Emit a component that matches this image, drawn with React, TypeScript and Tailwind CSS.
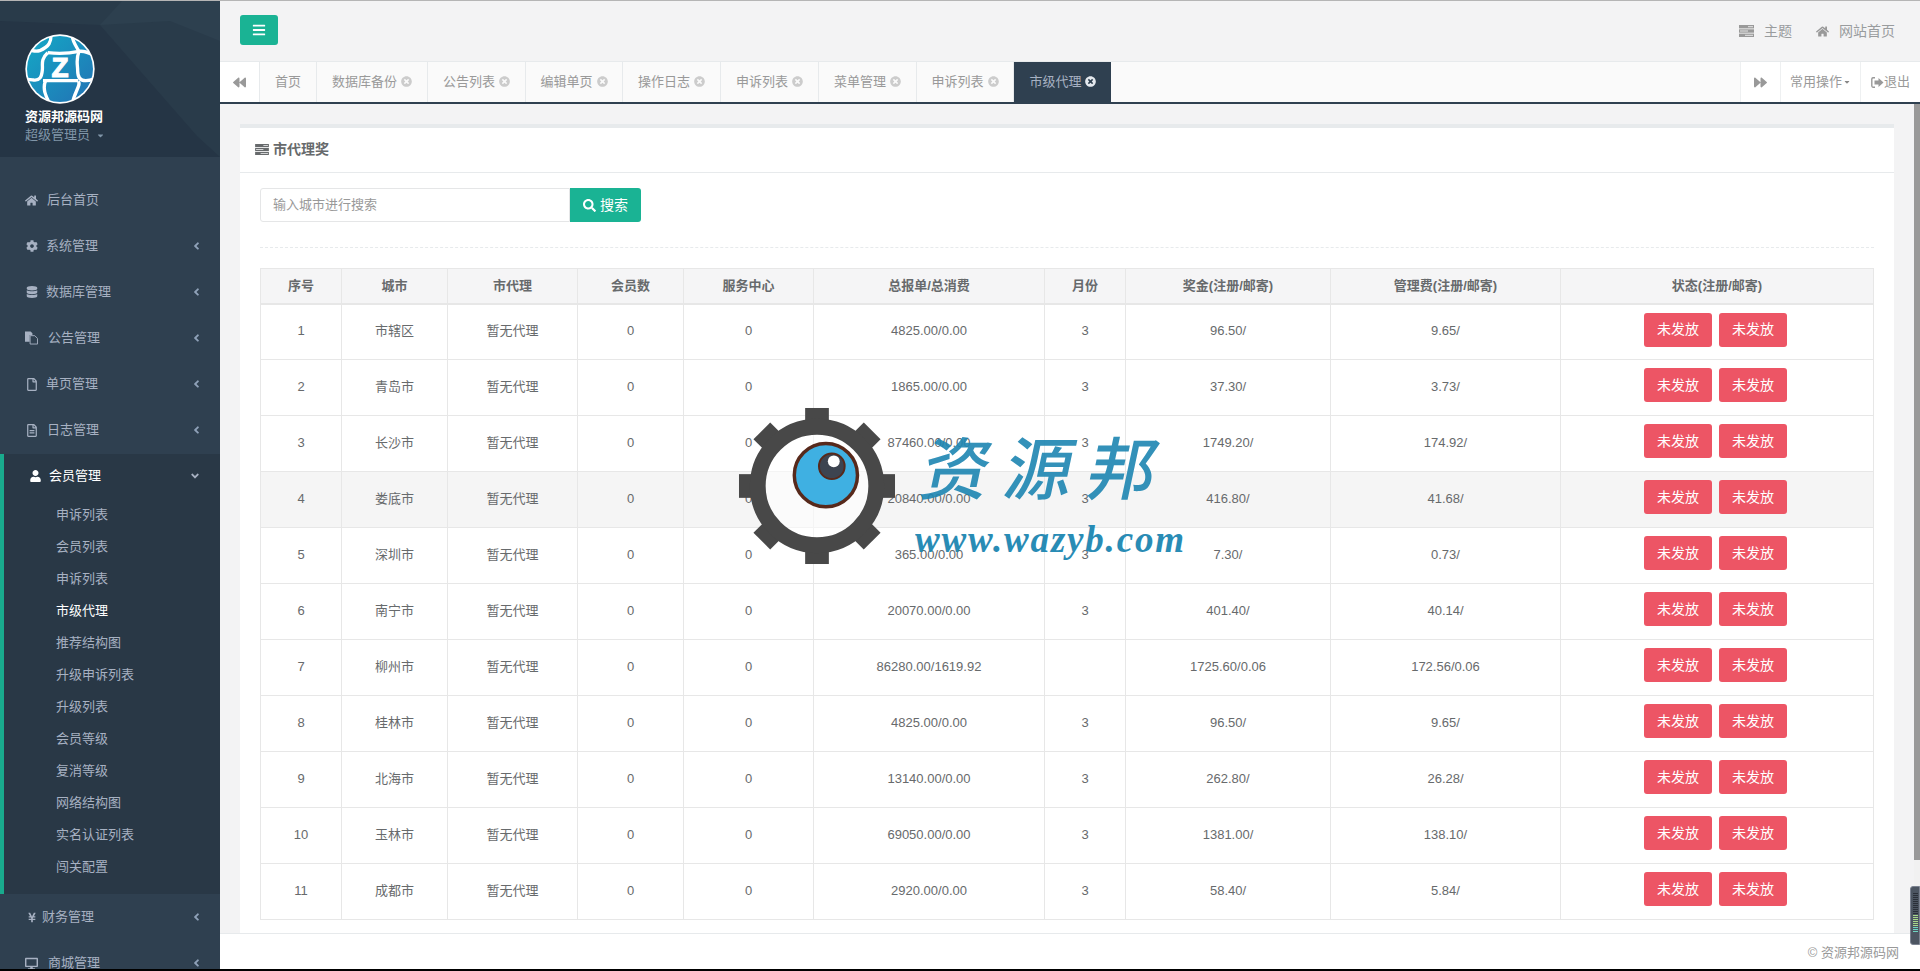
import React from "react";
import {
  FaHome, FaCog, FaDatabase, FaRegFile, FaRegFileAlt, FaUser, FaYenSign, FaDesktop,
  FaAngleLeft, FaAngleDown, FaBars, FaSearch, FaBackward, FaForward, FaTimesCircle, FaCaretDown,
} from "react-icons/fa";

function TasksIcon({ className }: { className?: string }) {
  return (
    <svg viewBox="0 0 15 12" className={className} fill="currentColor">
      <rect x="0" y="0" width="15" height="3.4" />
      <rect x="0" y="4.3" width="15" height="3.4" />
      <rect x="0" y="8.6" width="15" height="3.4" />
      <rect x="9" y="1.2" width="5" height="1" fill="#f3f3f4" opacity="0.85" />
      <rect x="1" y="5.5" width="8" height="1" fill="#f3f3f4" opacity="0.85" />
      <rect x="6" y="9.8" width="8" height="1" fill="#f3f3f4" opacity="0.85" />
    </svg>
  );
}

function FilesIcon({ className }: { className?: string }) {
  return (
    <svg viewBox="0 0 14 14" className={className}>
      <path d="M0 0h6l2 2v2H5v7H0z" fill="currentColor" />
      <path d="M5.5 4.5h5l3 3v6h-8z" fill="#2f4050" stroke="currentColor" />
    </svg>
  );
}

function LogoutIcon({ className }: { className?: string }) {
  return (
    <svg viewBox="0 0 13 11" className={className}>
      <path d="M4 .8H2A1.4 1.4 0 0 0 .8 2v7A1.4 1.4 0 0 0 2 10.2h2" fill="none" stroke="currentColor" strokeWidth="1.4" />
      <path d="M3.5 3.5h4V1l5 4.5-5 4.5V7.5h-4z" fill="currentColor" />
    </svg>
  );
}

function Logo() {
  const lines = [
    "M78 -5 C80 25 72 38 44 50 C28 56 14 44 -5 50",
    "M68 56 C100 60 135 58 162 52 C180 50 195 56 215 70",
    "M68 56 C46 76 54 92 52 108 C50 130 44 140 26 138 C14 136 6 134 -5 138",
    "M162 52 C152 76 158 92 158 110 C158 128 164 140 182 140 C194 140 205 136 215 132",
    "M140 -5 C140 20 152 34 162 52",
    "M54 140 H160",
    "M62 140 C52 162 60 184 78 215",
    "M160 142 C170 154 142 182 142 215",
  ];
  return (
    <svg viewBox="0 0 210 210" className="block w-[70px] h-[70px]">
      <defs>
        <linearGradient id="logoG" x1="0" y1="0" x2="1" y2="1">
          <stop offset="0" stopColor="#14a9c6" />
          <stop offset="1" stopColor="#2272b4" />
        </linearGradient>
        <clipPath id="logoC">
          <circle cx="105" cy="105" r="101" />
        </clipPath>
      </defs>
      <circle cx="105" cy="105" r="104" fill="#fff" />
      <circle cx="105" cy="105" r="99" fill="url(#logoG)" />
      <g clipPath="url(#logoC)" fill="none" stroke="#fff" strokeWidth="10">
        {lines.map((d) => (
          <path key={d} d={d} />
        ))}
      </g>
      <text x="105" y="130" textAnchor="middle" fontSize="84" fontWeight="700" stroke="#fff" strokeWidth="3" fontFamily="Liberation Sans, sans-serif" fill="#fff">Z</text>
    </svg>
  );
}

const menu1: [string, React.ReactNode, string, boolean][] = [
  ["后台首页", <FaHome className="w-[13px] h-[13px]" />, "ml-[9px]", false],
  ["系统管理", <FaCog className="w-[12px] h-[12px]" />, "ml-[8px]", true],
  ["数据库管理", <FaDatabase className="w-[12px] h-[12px]" />, "ml-[8px]", true],
  ["公告管理", <FilesIcon className="w-[14px] h-[14px]" />, "ml-[10px]", true],
  ["单页管理", <FaRegFile className="w-[12px] h-[13px]" />, "ml-[8px]", true],
  ["日志管理", <FaRegFileAlt className="w-[12px] h-[13px]" />, "ml-[9px]", true],
];

const subs = ["申诉列表", "会员列表", "申诉列表", "市级代理", "推荐结构图", "升级申诉列表", "升级列表", "会员等级", "复消等级", "网络结构图", "实名认证列表", "闯关配置"];

function NavItem({ label, icon, gap, arrow }: { label: string; icon: React.ReactNode; gap: string; arrow: boolean }) {
  return (
    <div className="h-[46px] flex items-center pl-[25px] pr-[20px] text-[#a7b1c2]">
      <span className="w-[13px] flex justify-center shrink-0">{icon}</span>
      <span className={gap}>{label}</span>
      {arrow && <FaAngleLeft className="ml-auto w-[7px] h-[12px] text-[#8fa1b8]" />}
    </div>
  );
}

function Sidebar() {
  return (
    <aside className="w-[220px] shrink-0 bg-[#2f4050] overflow-hidden">
      <div className="relative h-[156px] bg-[#293a4a] overflow-hidden">
        <svg viewBox="0 0 220 156" className="absolute inset-0 w-full h-full">
          <polygon points="0,0 220,0 220,156 0,156" fill="#293b4a" />
          <polygon points="0,20 100,24 197,135 220,156 0,156" fill="#253545" />
          <polygon points="100,24 122,0 220,0 220,40 170,20" fill="#2d404f" />
        </svg>
        <div className="relative pt-[33px] pl-[25px]">
          <Logo />
          <div className="mt-[4px] text-white font-bold leading-[18px]">资源邦源码网</div>
          <div className="flex items-center text-[#8095a8] leading-[18px]">
            超级管理员
            <FaCaretDown className="ml-[6px] w-[9px] h-[9px]" />
          </div>
        </div>
      </div>
      <nav className="pt-[20px]">
        {menu1.map(([l, i, g, a]) => (
          <NavItem key={l} label={l} icon={i} gap={g} arrow={a} />
        ))}
        <div className="h-[1px]" />
        <div className="bg-[#293846] border-l-4 border-[#19aa8d] h-[440px]">
          <div className="h-[45px] flex items-center pl-[25px] pr-[19px] pb-[1px] text-white">
            <span className="w-[13px] flex justify-center">
              <FaUser className="w-[11px] h-[12px]" />
            </span>
            <span className="ml-[7px]">会员管理</span>
            <FaAngleDown className="ml-auto w-[12px] h-[12px] text-[#a7b1c2]" />
          </div>
          <div className="pl-[52px]">
            {subs.map((s, i) => (
              <div key={i} className={"h-[32px] leading-[32px] " + (s === "市级代理" ? "text-white" : "text-[#a7b1c2]")}>
                {s}
              </div>
            ))}
          </div>
        </div>
        <NavItem label="财务管理" icon={<FaYenSign className="w-[8px] h-[11px]" />} gap="ml-[4px]" arrow />
        <NavItem label="商城管理" icon={<FaDesktop className="w-[15px] h-[13px]" />} gap="ml-[10px]" arrow />
      </nav>
    </aside>
  );
}

const tabs: [string, number, boolean][] = [
  ["首页", 57, false],
  ["数据库备份", 111, true],
  ["公告列表", 98, true],
  ["编辑单页", 97, true],
  ["操作日志", 98, true],
  ["申诉列表", 98, true],
  ["菜单管理", 98, true],
  ["申诉列表", 97, true],
];

function TabsBar() {
  return (
    <div className="h-[43px] shrink-0 flex border-t border-[#e7eaec] border-b-2 border-b-[#2f4050] bg-[#fafafa] text-[#999c9e]">
      <div className="w-[40px] bg-white border-r border-[#e7eaec] flex items-center justify-center">
        <FaBackward className="w-[13px] h-[13px] text-[#999]" />
      </div>
      {tabs.map(([t, w, x], i) => (
        <div key={i} style={{ width: w }} className="shrink-0 border-r border-[#e7eaec] flex items-center justify-center pb-[1px] text-[#999]">
          {t}
          {x && <FaTimesCircle className="ml-[4px] w-[11px] h-[11px] text-[#ccc]" />}
        </div>
      ))}
      <div className="w-[97px] shrink-0 bg-[#2f4050] text-[#a7b1c2] flex items-center justify-center pb-[1px]">
        市级代理
        <FaTimesCircle className="ml-[3px] w-[11px] h-[11px] text-[#e5e9ee]" />
      </div>
      <div className="flex-1" />
      <div className="w-[41px] bg-white border-x border-[#eef0f1] flex items-center justify-center">
        <FaForward className="w-[13px] h-[13px] text-[#999]" />
      </div>
      <div className="w-[80px] bg-white border-r border-[#eef0f1] flex items-center justify-center text-[#999]">
        常用操作
        <FaCaretDown className="ml-[1px] w-[8px] h-[8px] text-[#888]" />
      </div>
      <div className="w-[59px] bg-white flex items-center justify-center text-[#999]">
        <LogoutIcon className="w-[13px] h-[11px]" />
        退出
      </div>
    </div>
  );
}

const rows: [string, string, string, string, string, string][] = [
  ["市辖区", "4825.00/0.00", "3", "96.50/", "9.65/", "0"],
  ["青岛市", "1865.00/0.00", "3", "37.30/", "3.73/", "0"],
  ["长沙市", "87460.00/0.00", "3", "1749.20/", "174.92/", "0"],
  ["娄底市", "20840.00/0.00", "3", "416.80/", "41.68/", "0"],
  ["深圳市", "365.00/0.00", "3", "7.30/", "0.73/", "0"],
  ["南宁市", "20070.00/0.00", "3", "401.40/", "40.14/", "0"],
  ["柳州市", "86280.00/1619.92", "", "1725.60/0.06", "172.56/0.06", "0"],
  ["桂林市", "4825.00/0.00", "3", "96.50/", "9.65/", "0"],
  ["北海市", "13140.00/0.00", "3", "262.80/", "26.28/", "0"],
  ["玉林市", "69050.00/0.00", "3", "1381.00/", "138.10/", "0"],
  ["成都市", "2920.00/0.00", "3", "58.40/", "5.84/", "0"],
];

const cols: [string, string][] = [
  ["序号", "w-[81px]"],
  ["城市", "w-[106px]"],
  ["市代理", "w-[130px]"],
  ["会员数", "w-[106px]"],
  ["服务中心", "w-[130px]"],
  ["总报单/总消费", "w-[231px]"],
  ["月份", "w-[81px]"],
  ["奖金(注册/邮寄)", "w-[205px]"],
  ["管理费(注册/邮寄)", "w-[230px]"],
  ["状态(注册/邮寄)", "w-[313px]"],
];

function DataTable() {
  const td = "border border-[#e7e7e7] text-center align-middle pb-[2px]";
  return (
    <table className="w-[1613px] table-fixed border-collapse text-[#676a6c]">
      <thead>
        <tr className="h-[35px] bg-[#f5f5f6]">
          {cols.map(([c, w]) => (
            <th key={c} className={"border border-[#e7e7e7] border-b-2 font-bold text-center pb-[1px] " + w}>
              {c}
            </th>
          ))}
        </tr>
      </thead>
      <tbody>
        {rows.map((r, i) => (
          <tr key={i} className={"h-[56px] " + (i === 3 ? "bg-[#f5f5f5]" : "")}>
            <td className={td}>{i + 1}</td>
            <td className={td}>{r[0]}</td>
            <td className={td}>暂无代理</td>
            <td className={td}>0</td>
            <td className={td}>{r[5]}</td>
            <td className={td}>{r[1]}</td>
            <td className={td}>{r[2]}</td>
            <td className={td}>{r[3]}</td>
            <td className={td}>{r[4]}</td>
            <td className="border border-[#e7e7e7] align-top pt-[8px]">
              <div className="flex justify-center gap-[7px] pr-[3px]">
                <button className="w-[68px] h-[34px] rounded-[3px] bg-[#ed5565] text-white text-[14px]">未发放</button>
                <button className="w-[68px] h-[34px] rounded-[3px] bg-[#ed5565] text-white text-[14px]">未发放</button>
              </div>
            </td>
          </tr>
        ))}
      </tbody>
    </table>
  );
}

function Watermark() {
  const teeth = [0, 45, 90, 135, 180, 225, 270, 315];
  return (
    <div className="absolute left-[737px] top-[407px] w-[460px] h-[160px] pointer-events-none">
      <svg viewBox="0 0 160 160" className="absolute left-0 top-0 w-[160px] h-[158px]">
        {teeth.map((a) => (
          <rect key={a} x="68" y="1" width="24" height="24" fill="#484848" transform={`rotate(${a} 80 80)`} />
        ))}
        <circle cx="80" cy="80" r="60" fill="#ffffff" fillOpacity="0.55" stroke="#484848" strokeWidth="16" />
        <circle cx="89" cy="69" r="32" fill="#3fb0e2" stroke="#57291b" strokeWidth="3.5" />
        <circle cx="95" cy="60" r="13" fill="#3d4450" stroke="#57291b" strokeWidth="2" />
        <circle cx="97" cy="55" r="6" fill="#ffffff" />
      </svg>
      <div className="absolute left-[186px] top-[18px] flex text-[#1d86b2] text-[68px] leading-[90px] font-medium -skew-x-12 tracking-[15px] opacity-90 whitespace-nowrap">
        资源邦
      </div>
      <div className="absolute left-[178px] top-[113px] text-[#1d86b2] text-[37px] leading-[40px] italic font-bold [font-family:'Liberation_Serif',serif] tracking-[1.8px] opacity-95 whitespace-nowrap">
        www.wazyb.com
      </div>
    </div>
  );
}

export default function App() {
  return (
    <div className="relative h-[971px] w-[1920px] overflow-hidden flex flex-col bg-[#f3f3f4] text-[13px] [font-family:'Liberation_Sans','Noto_Sans_CJK_SC',sans-serif]">
      <div className="h-px shrink-0 bg-[#b5b5b5]" />
      <div className="flex flex-1 min-h-0">
        <Sidebar />
        <div className="flex-1 min-w-0 flex flex-col">
          <header className="h-[60px] shrink-0 flex items-start pl-[20px] pt-[14px] bg-[#f3f3f4]">
            <button className="w-[38px] h-[30px] rounded-[3px] bg-[#1ab394] text-white flex items-center justify-center">
              <FaBars className="w-[14px] h-[14px]" />
            </button>
            <div className="ml-auto flex items-center text-[#999c9e] h-[32px] pr-[25px] text-[14px]">
              <TasksIcon className="w-[15px] h-[12px] text-[#999]" />
              <span className="ml-[10px]">主题</span>
              <FaHome className="ml-[24px] w-[13px] h-[13px] text-[#999]" />
              <span className="ml-[10px]">网站首页</span>
            </div>
          </header>
          <TabsBar />
          <div className="flex-1 min-h-0 flex">
            <main className="flex-1 min-w-0 pt-[20px] pl-[20px] pr-[20px] overflow-hidden">
              <section className="bg-white border-t-4 border-[#e7eaec] h-full">
                <div className="h-[45px] flex items-center pl-[15px] pb-[2px] border-b border-[#e7eaec] text-[#676a6c] font-bold text-[14px]">
                  <TasksIcon className="w-[14px] h-[11px] text-[#676a6c]" />
                  <span className="ml-[4px]">市代理奖</span>
                </div>
                <div className="px-[20px] pt-[15px]">
                  <div className="flex">
                    <div className="w-[310px] h-[34px] border border-[#e5e6e7] rounded-l-[3px] pl-[12px] flex items-center text-[#999]">
                      输入城市进行搜索
                    </div>
                    <button className="w-[71px] h-[34px] bg-[#1ab394] text-white rounded-r-[3px] flex items-center justify-center text-[14px]">
                      <FaSearch className="w-[13px] h-[13px]" />
                      <span className="ml-[4px]">搜索</span>
                    </button>
                  </div>
                  <div className="mt-[25px] mb-[20px] border-t border-dashed border-[#e7eaec]" />
                  <DataTable />
                </div>
              </section>
            </main>
            <div className="w-[6px] shrink-0 bg-[#f1f1f1]">
              <div className="h-[756px] bg-[#999]" />
            </div>
          </div>
          <footer className="h-[36px] shrink-0 bg-white border-t border-[#e7eaec] flex items-center justify-end pr-[21px] text-[#999] pt-[2px]">
            © 资源邦源码网
          </footer>
        </div>
      </div>
      <div className="h-[2px] shrink-0 bg-black" />
      <Watermark />
      <div className="absolute right-0 top-[886px] w-[10px] h-[59px] rounded-l-[3px] bg-[#4c5561] border border-[#7b8290] flex flex-col items-center gap-[1px] pt-[6px]">
        {Array.from({ length: 20 }).map((_, i) => (
          <div key={i} className={"w-[5px] h-[1px] " + (i < 11 ? "bg-[#2a2f38]" : i < 17 ? "bg-[#a8d88a]" : "bg-[#6fd6c2]")} />
        ))}
      </div>
    </div>
  );
}
